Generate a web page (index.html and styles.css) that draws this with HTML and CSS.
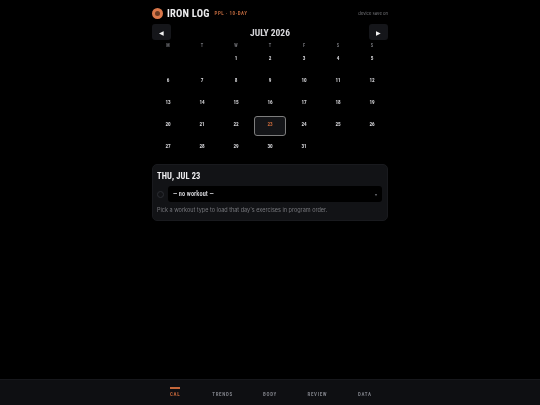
FILE: index.html
```html
<!DOCTYPE html>
<html lang="en">
<head>
    <meta charset="UTF-8">
    <meta name="viewport" content="width=device-width, initial-scale=1.0">
    <title>Iron Log</title>
    <link rel="stylesheet" href="styles.css">
</head>
<body>
    <div class="container">
        <header class="app-header">
            <span class="logo"></span>
            <h1>IRON LOG</h1>
            <span class="program">PPL · 10-DAY</span>
            <span class="save-note">device save on</span>
        </header>

        <div class="month-bar">
            <button class="month-btn" type="button">◀</button>
            <h2>JULY 2026</h2>
            <button class="month-btn" type="button">▶</button>
        </div>

        <div class="calendar">
            <div class="weekday">M</div>
            <div class="weekday">T</div>
            <div class="weekday">W</div>
            <div class="weekday">T</div>
            <div class="weekday">F</div>
            <div class="weekday">S</div>
            <div class="weekday">S</div>

            <div class="day"></div>
            <div class="day"></div>
            <div class="day">1</div>
            <div class="day">2</div>
            <div class="day">3</div>
            <div class="day">4</div>
            <div class="day">5</div>

            <div class="day">6</div>
            <div class="day">7</div>
            <div class="day">8</div>
            <div class="day">9</div>
            <div class="day">10</div>
            <div class="day">11</div>
            <div class="day">12</div>

            <div class="day">13</div>
            <div class="day">14</div>
            <div class="day">15</div>
            <div class="day">16</div>
            <div class="day">17</div>
            <div class="day">18</div>
            <div class="day">19</div>

            <div class="day">20</div>
            <div class="day">21</div>
            <div class="day">22</div>
            <div class="day today">23</div>
            <div class="day">24</div>
            <div class="day">25</div>
            <div class="day">26</div>

            <div class="day">27</div>
            <div class="day">28</div>
            <div class="day">29</div>
            <div class="day">30</div>
            <div class="day">31</div>
            <div class="day"></div>
            <div class="day"></div>
        </div>

        <section class="day-card">
            <h3>THU, JUL 23</h3>
            <div class="workout-row">
                <span class="status-dot"></span>
                <div class="workout-select">
                    <span>— no workout —</span>
                    <span class="caret">▾</span>
                </div>
            </div>
            <p class="hint">Pick a workout type to load that day's exercises in program order.</p>
        </section>
    </div>

    <nav class="tab-bar">
        <div class="tabs">
            <a class="tab active">CAL</a>
            <a class="tab">TRENDS</a>
            <a class="tab">BODY</a>
            <a class="tab">REVIEW</a>
            <a class="tab">DATA</a>
        </div>
    </nav>
</body>
</html>
```

FILE: styles.css
```css
* {
    box-sizing: border-box;
}

html, body {
    height: 100%;
}

body {
    margin: 0;
    background-color: #000;
    color: #e8e8ea;
    font-family: Roboto, "Liberation Sans", sans-serif;
    font-stretch: 75%;
    display: flex;
    flex-direction: column;
    overflow: hidden;
}

.container {
    width: 236px;
    margin: 0 auto;
    flex: 1;
    filter: blur(0.25px);
}

.app-header {
    height: 24px;
    padding-top: 2px;
    display: flex;
    align-items: center;
}

.logo {
    width: 11px;
    height: 11px;
    border-radius: 50%;
    border: 3px solid #d9774a;
    background: #6b3a22;
    margin-right: 4px;
}

h1 {
    margin: 0 5px 0 0;
    font-size: 10.5px;
    font-weight: 700;
    letter-spacing: 0.2px;
    color: #ececee;
}

.program {
    font-size: 5px;
    font-weight: 700;
    letter-spacing: 0.5px;
    color: #b8653c;
}

.save-note {
    margin-left: auto;
    font-family: "Inter", sans-serif;
    font-stretch: normal;
    font-size: 4.2px;
    color: #77787d;
}

.month-bar {
    height: 16px;
    display: flex;
    align-items: center;
    justify-content: space-between;
}

h2 {
    margin: 0;
    font-size: 9.5px;
    font-weight: 700;
    letter-spacing: 0;
    color: #d8d8dc;
}

.month-btn {
    width: 19px;
    height: 16px;
    padding: 0;
    border: none;
    border-radius: 3px;
    background: #15161a;
    color: #f2f2f2;
    font-size: 6px;
}

.calendar {
    display: grid;
    grid-template-columns: repeat(7, 32px);
    grid-template-rows: 6px;
    grid-auto-rows: 20px;
    gap: 2px;
    margin-top: 2px;
}

.weekday,
.day {
    display: flex;
    justify-content: center;
    font-weight: 700;
    color: #d4d4d8;
}

.weekday {
    align-items: center;
    font-size: 4.5px;
    color: #6f7075;
}

.day {
    align-items: flex-start;
    padding-top: 5px;
    font-size: 5.2px;
}

.day.today {
    padding-top: 4px;
    border: 1px solid #7d7d7d;
    border-radius: 3px;
    background: #141518;
    color: #c4673a;
}

.day-card {
    margin-top: 6px;
    height: 57px;
    padding: 6px 5px 6px 4px;
    background: #121316;
    border: 1px solid #191a1e;
    border-radius: 5px;
}

h3 {
    margin: 0 0 5px;
    font-size: 8.5px;
    font-weight: 700;
    letter-spacing: 0.1px;
    color: #eeeef0;
}

.workout-row {
    display: flex;
    align-items: center;
    gap: 4px;
}

.status-dot {
    width: 7px;
    height: 7px;
    border: 1px solid #2c2e33;
    border-radius: 50%;
}

.workout-select {
    flex: 1;
    height: 16px;
    padding: 0 5px;
    display: flex;
    align-items: center;
    justify-content: space-between;
    background: #000;
    border-radius: 3px;
    font-size: 6.3px;
    font-weight: 700;
    letter-spacing: 0.1px;
    color: #c8c8cc;
}

.caret {
    color: #66676c;
    font-size: 4px;
}

.hint {
    margin: 5px 0 0;
    font-family: "Inter", sans-serif;
    font-stretch: normal;
    font-size: 5.5px;
    color: #77787d;
}

.tab-bar {
    height: 26px;
    background: #0e0f12;
    border-top: 1px solid #17181c;
}

.tabs {
    width: 237px;
    margin: 0 auto;
    display: grid;
    grid-template-columns: repeat(5, 1fr);
    filter: blur(0.25px);
}

.tab {
    position: relative;
    height: 25px;
    padding-top: 11px;
    text-align: center;
    font-size: 5px;
    font-weight: 700;
    letter-spacing: 0.7px;
    color: #7b7d84;
}

.tab.active {
    color: #c4673a;
}

.tab.active::before {
    content: "";
    position: absolute;
    top: 7px;
    left: 18px;
    width: 10px;
    height: 2px;
    background: #c4673a;
}
```
